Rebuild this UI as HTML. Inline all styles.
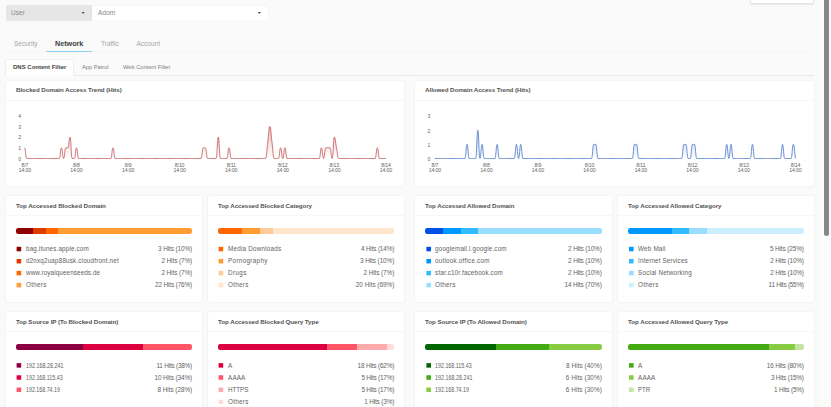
<!DOCTYPE html>
<html><head><meta charset="utf-8"><style>
*{margin:0;padding:0;box-sizing:border-box}
html,body{width:831px;height:407px;overflow:hidden;background:#fafafa;font-family:"Liberation Sans",sans-serif;color:#555}
.a{position:absolute}
.t{position:absolute;white-space:nowrap;line-height:1}
.card{position:absolute;background:#fff;border-radius:2px;box-shadow:0 0 2px rgba(0,0,0,0.09)}
.ttl{position:absolute;white-space:nowrap;font-weight:bold;font-size:6.2px;letter-spacing:-0.06px;color:#525252;line-height:1}
.div{position:absolute;left:0;right:0;height:1px;background:#f6f6f6}
.bar{position:absolute;height:6.4px;border-radius:2.3px;overflow:hidden;display:flex}
.bar i{display:block;height:100%}
.sq{position:absolute;width:4.6px;height:4.6px}
.lg{position:absolute;white-space:nowrap;font-size:6.3px;color:#626262;line-height:1}
.val{position:absolute;white-space:nowrap;font-size:6.4px;color:#646464;line-height:1;text-align:right}
.ax{position:absolute;white-space:nowrap;font-size:5.2px;letter-spacing:-0.15px;color:#666;line-height:1;text-align:center}
</style></head><body>
<div class="a" style="left:749.6px;top:-11.6px;width:64.5px;height:16px;background:#fff;border:1px solid #e2e2e2;border-radius:2px;box-shadow:0 1px 1.5px rgba(0,0,0,0.07)"></div>
<div class="a" style="left:6px;top:5px;width:86px;height:16px;background:#e6e6e6;border-radius:1.5px"></div>
<div class="t" style="left:11px;top:10.00px;font-size:6.6px;color:#8a8a8a">User</div>
<svg class="a" style="left:80px;top:10px" width="6" height="6"><path d="M1.5,2 L4.9,2 L3.2,3.9 Z" fill="#555"/></svg>
<div class="a" style="left:92px;top:6px;width:176.3px;height:14.3px;background:#fff;border-radius:1.5px;box-shadow:0 0 1.2px rgba(0,0,0,0.13)"></div>
<div class="t" style="left:98.1px;top:10.00px;font-size:6.6px;color:#888">Adom</div>
<svg class="a" style="left:256px;top:10px" width="6" height="6"><path d="M1.6,2 L5.0,2 L3.3,3.9 Z" fill="#555"/></svg>
<div class="a" style="left:5px;top:51px;width:809px;height:1px;background:#f5f5f5"></div>
<div class="t" style="left:14px;top:41.00px;font-size:6.5px;color:#a5a5a5">Security</div>
<div class="t" style="left:55px;top:40.00px;font-size:7.2px;font-weight:bold;color:#404040">Network</div>
<div class="t" style="left:101px;top:41.00px;font-size:6.5px;color:#a5a5a5">Traffic</div>
<div class="t" style="left:136.5px;top:41.00px;font-size:6.5px;color:#a5a5a5">Account</div>
<div class="a" style="left:46px;top:51px;width:46px;height:1px;background:#8dd0f2"></div>
<div class="a" style="left:5px;top:75px;width:809px;height:1px;background:#e8e8e8"></div>
<div class="a" style="left:5px;top:59px;width:69px;height:17px;background:#fff;border:1px solid #eeeeee;border-bottom:none;border-radius:1.5px 1.5px 0 0"></div>
<div class="t" style="left:13px;top:64.00px;font-size:6px;font-weight:bold;color:#444">DNS Content Filter</div>
<div class="t" style="left:82px;top:65.00px;font-size:5.7px;color:#7a7a7a">App Patrol</div>
<div class="t" style="left:123px;top:65.00px;font-size:5.7px;color:#7a7a7a">Web Content Filter</div>
<div class="card" style="left:5.5px;top:81px;width:398.8px;height:105px">
<div class="ttl" style="left:10.5px;top:6.00px">Blocked Domain Access Trend (Hits)</div>
<div class="div" style="top:19px"></div>
</div>
<div class="ax" style="left:16.5px;top:157.00px;width:6px">0</div>
<div class="ax" style="left:16.5px;top:146.00px;width:6px">1</div>
<div class="ax" style="left:16.5px;top:135.00px;width:6px">2</div>
<div class="ax" style="left:16.5px;top:125.00px;width:6px">3</div>
<div class="ax" style="left:16.5px;top:114.00px;width:6px">4</div>
<svg class="a" style="left:0;top:0" width="831" height="407"><defs><linearGradient id="gb" x1="0" y1="0" x2="0" y2="1"><stop offset="0" stop-color="#d77777" stop-opacity="0.5"/><stop offset="1" stop-color="#d77777" stop-opacity="0.0"/></linearGradient></defs><path d="M24.90,147.80 C25.93,155.50 26.02,158.50 27.05,158.50 C28.08,158.50 28.17,158.50 29.20,158.50 C30.23,158.50 30.31,158.50 31.35,158.50 C32.38,158.50 32.46,158.50 33.50,158.50 C34.53,158.50 34.61,158.50 35.64,158.50 C36.68,158.50 36.76,158.50 37.79,158.50 C38.82,158.50 38.91,158.50 39.94,158.50 C40.97,158.50 41.06,158.50 42.09,158.50 C43.12,158.50 43.21,158.50 44.24,158.50 C45.27,158.50 45.36,158.50 46.39,158.50 C47.42,158.50 47.51,158.50 48.54,158.50 C49.57,158.50 49.65,158.50 50.69,158.50 C51.72,158.50 51.80,158.50 52.83,158.50 C53.87,158.50 53.95,158.50 54.98,158.50 C56.01,158.50 56.10,158.50 57.13,158.50 C58.16,158.50 58.25,158.50 59.28,158.50 C60.31,158.50 60.40,147.80 61.43,147.80 C62.46,147.80 62.55,158.50 63.58,158.50 C64.61,158.50 64.70,147.80 65.73,147.80 C66.76,147.80 66.84,147.80 67.88,147.80 C68.91,147.80 68.99,137.10 70.03,137.10 C71.06,137.10 71.14,158.50 72.17,158.50 C73.21,158.50 73.29,158.50 74.32,158.50 C75.35,158.50 75.44,147.80 76.47,147.80 C77.50,147.80 77.59,158.50 78.62,158.50 C79.65,158.50 79.74,158.50 80.77,158.50 C81.80,158.50 81.89,158.50 82.92,158.50 C83.95,158.50 84.04,158.50 85.07,158.50 C86.10,158.50 86.18,158.50 87.22,158.50 C88.25,158.50 88.33,158.50 89.36,158.50 C90.40,158.50 90.48,158.50 91.51,158.50 C92.54,158.50 92.63,158.50 93.66,158.50 C94.69,158.50 94.78,158.50 95.81,158.50 C96.84,158.50 96.93,158.50 97.96,158.50 C98.99,158.50 99.08,158.50 100.11,158.50 C101.14,158.50 101.23,158.50 102.26,158.50 C103.29,158.50 103.37,158.50 104.41,158.50 C105.44,158.50 105.52,158.50 106.55,158.50 C107.59,158.50 107.67,158.50 108.70,158.50 C109.73,158.50 109.82,158.50 110.85,158.50 C111.88,158.50 111.97,147.80 113.00,147.80 C114.03,147.80 114.12,158.50 115.15,158.50 C116.18,158.50 116.27,158.50 117.30,158.50 C118.33,158.50 118.42,158.50 119.45,158.50 C120.48,158.50 120.56,158.50 121.60,158.50 C122.63,158.50 122.71,158.50 123.75,158.50 C124.78,158.50 124.86,158.50 125.89,158.50 C126.93,158.50 127.01,158.50 128.04,158.50 C129.07,158.50 129.16,158.50 130.19,158.50 C131.22,158.50 131.31,158.50 132.34,158.50 C133.37,158.50 133.46,158.50 134.49,158.50 C135.52,158.50 135.61,158.50 136.64,158.50 C137.67,158.50 137.76,158.50 138.79,158.50 C139.82,158.50 139.90,158.50 140.94,158.50 C141.97,158.50 142.05,158.50 143.08,158.50 C144.12,158.50 144.20,158.50 145.23,158.50 C146.26,158.50 146.35,158.50 147.38,158.50 C148.41,158.50 148.50,158.50 149.53,158.50 C150.56,158.50 150.65,158.50 151.68,158.50 C152.71,158.50 152.80,158.50 153.83,158.50 C154.86,158.50 154.95,158.50 155.98,158.50 C157.01,158.50 157.09,158.50 158.13,158.50 C159.16,158.50 159.24,158.50 160.28,158.50 C161.31,158.50 161.39,158.50 162.42,158.50 C163.46,158.50 163.54,158.50 164.57,158.50 C165.60,158.50 165.69,158.50 166.72,158.50 C167.75,158.50 167.84,158.50 168.87,158.50 C169.90,158.50 169.99,158.50 171.02,158.50 C172.05,158.50 172.14,158.50 173.17,158.50 C174.20,158.50 174.29,158.50 175.32,158.50 C176.35,158.50 176.43,158.50 177.47,158.50 C178.50,158.50 178.58,158.50 179.61,158.50 C180.65,158.50 180.73,158.50 181.76,158.50 C182.79,158.50 182.88,158.50 183.91,158.50 C184.94,158.50 185.03,158.50 186.06,158.50 C187.09,158.50 187.18,158.50 188.21,158.50 C189.24,158.50 189.33,158.50 190.36,158.50 C191.39,158.50 191.48,158.50 192.51,158.50 C193.54,158.50 193.62,158.50 194.66,158.50 C195.69,158.50 195.77,158.50 196.80,158.50 C197.84,158.50 197.92,158.50 198.95,158.50 C199.99,158.50 200.07,158.50 201.10,158.50 C202.13,158.50 202.22,147.80 203.25,147.80 C204.28,147.80 204.37,147.80 205.40,147.80 C206.43,147.80 206.52,158.50 207.55,158.50 C208.58,158.50 208.67,158.50 209.70,158.50 C210.73,158.50 210.81,158.50 211.85,158.50 C212.88,158.50 212.96,158.50 214.00,158.50 C215.03,158.50 215.11,158.50 216.14,158.50 C217.18,158.50 217.26,137.10 218.29,137.10 C219.32,137.10 219.41,158.50 220.44,158.50 C221.47,158.50 221.56,158.50 222.59,158.50 C223.62,158.50 223.71,158.50 224.74,158.50 C225.77,158.50 225.86,158.50 226.89,158.50 C227.92,158.50 228.01,147.80 229.04,147.80 C230.07,147.80 230.15,158.50 231.19,158.50 C232.22,158.50 232.30,158.50 233.33,158.50 C234.37,158.50 234.45,158.50 235.48,158.50 C236.51,158.50 236.60,158.50 237.63,158.50 C238.66,158.50 238.75,158.50 239.78,158.50 C240.81,158.50 240.90,158.50 241.93,158.50 C242.96,158.50 243.05,158.50 244.08,158.50 C245.11,158.50 245.20,158.50 246.23,158.50 C247.26,158.50 247.34,158.50 248.38,158.50 C249.41,158.50 249.49,158.50 250.53,158.50 C251.56,158.50 251.64,158.50 252.67,158.50 C253.71,158.50 253.79,158.50 254.82,158.50 C255.85,158.50 255.94,158.50 256.97,158.50 C258.00,158.50 258.09,158.50 259.12,158.50 C260.15,158.50 260.24,158.50 261.27,158.50 C262.30,158.50 262.39,158.50 263.42,158.50 C264.45,158.50 264.54,158.50 265.57,158.50 C266.60,158.50 266.68,150.15 267.72,142.45 C268.75,134.75 268.83,126.40 269.86,126.40 C270.90,126.40 270.98,134.75 272.01,142.45 C273.04,150.15 273.13,158.50 274.16,158.50 C275.19,158.50 275.28,158.50 276.31,158.50 C277.34,158.50 277.43,158.50 278.46,158.50 C279.49,158.50 279.58,147.80 280.61,147.80 C281.64,147.80 281.73,158.50 282.76,158.50 C283.79,158.50 283.87,147.80 284.91,147.80 C285.94,147.80 286.02,158.50 287.05,158.50 C288.09,158.50 288.17,158.50 289.20,158.50 C290.24,158.50 290.32,158.50 291.35,158.50 C292.38,158.50 292.47,158.50 293.50,158.50 C294.53,158.50 294.62,158.50 295.65,158.50 C296.68,158.50 296.77,158.50 297.80,158.50 C298.83,158.50 298.92,158.50 299.95,158.50 C300.98,158.50 301.06,158.50 302.10,158.50 C303.13,158.50 303.21,158.50 304.25,158.50 C305.28,158.50 305.36,158.50 306.39,158.50 C307.43,158.50 307.51,158.50 308.54,158.50 C309.57,158.50 309.66,158.50 310.69,158.50 C311.72,158.50 311.81,158.50 312.84,158.50 C313.87,158.50 313.96,158.50 314.99,158.50 C316.02,158.50 316.11,158.50 317.14,158.50 C318.17,158.50 318.26,158.50 319.29,158.50 C320.32,158.50 320.40,147.80 321.44,147.80 C322.47,147.80 322.55,158.50 323.58,158.50 C324.62,158.50 324.70,147.80 325.73,147.80 C326.76,147.80 326.85,147.80 327.88,147.80 C328.91,147.80 329.00,147.80 330.03,147.80 C331.06,147.80 331.15,158.50 332.18,158.50 C333.21,158.50 333.30,137.10 334.33,137.10 C335.36,137.10 335.45,142.66 336.48,147.80 C337.51,152.94 337.59,158.50 338.63,158.50 C339.66,158.50 339.74,158.50 340.77,158.50 C341.81,158.50 341.89,158.50 342.92,158.50 C343.96,158.50 344.04,158.50 345.07,158.50 C346.10,158.50 346.19,158.50 347.22,158.50 C348.25,158.50 348.34,158.50 349.37,158.50 C350.40,158.50 350.49,158.50 351.52,158.50 C352.55,158.50 352.64,158.50 353.67,158.50 C354.70,158.50 354.79,158.50 355.82,158.50 C356.85,158.50 356.93,158.50 357.97,158.50 C359.00,158.50 359.08,158.50 360.11,158.50 C361.15,158.50 361.23,158.50 362.26,158.50 C363.29,158.50 363.38,158.50 364.41,158.50 C365.44,158.50 365.53,158.50 366.56,158.50 C367.59,158.50 367.68,158.50 368.71,158.50 C369.74,158.50 369.83,158.50 370.86,158.50 C371.89,158.50 371.98,158.50 373.01,158.50 C374.04,158.50 374.12,158.50 375.16,158.50 C376.19,158.50 376.27,147.80 377.30,147.80 C378.34,147.80 378.42,158.50 379.45,158.50 C380.49,158.50 380.57,158.50 381.60,158.50 C382.63,158.50 382.72,158.50 383.75,158.50 C384.78,158.50 384.87,158.50 385.90,158.50 L385.90,158.50 L24.90,158.50 Z" fill="url(#gb)" stroke="none"/><path d="M24.90,147.80 C25.93,155.50 26.02,158.50 27.05,158.50 C28.08,158.50 28.17,158.50 29.20,158.50 C30.23,158.50 30.31,158.50 31.35,158.50 C32.38,158.50 32.46,158.50 33.50,158.50 C34.53,158.50 34.61,158.50 35.64,158.50 C36.68,158.50 36.76,158.50 37.79,158.50 C38.82,158.50 38.91,158.50 39.94,158.50 C40.97,158.50 41.06,158.50 42.09,158.50 C43.12,158.50 43.21,158.50 44.24,158.50 C45.27,158.50 45.36,158.50 46.39,158.50 C47.42,158.50 47.51,158.50 48.54,158.50 C49.57,158.50 49.65,158.50 50.69,158.50 C51.72,158.50 51.80,158.50 52.83,158.50 C53.87,158.50 53.95,158.50 54.98,158.50 C56.01,158.50 56.10,158.50 57.13,158.50 C58.16,158.50 58.25,158.50 59.28,158.50 C60.31,158.50 60.40,147.80 61.43,147.80 C62.46,147.80 62.55,158.50 63.58,158.50 C64.61,158.50 64.70,147.80 65.73,147.80 C66.76,147.80 66.84,147.80 67.88,147.80 C68.91,147.80 68.99,137.10 70.03,137.10 C71.06,137.10 71.14,158.50 72.17,158.50 C73.21,158.50 73.29,158.50 74.32,158.50 C75.35,158.50 75.44,147.80 76.47,147.80 C77.50,147.80 77.59,158.50 78.62,158.50 C79.65,158.50 79.74,158.50 80.77,158.50 C81.80,158.50 81.89,158.50 82.92,158.50 C83.95,158.50 84.04,158.50 85.07,158.50 C86.10,158.50 86.18,158.50 87.22,158.50 C88.25,158.50 88.33,158.50 89.36,158.50 C90.40,158.50 90.48,158.50 91.51,158.50 C92.54,158.50 92.63,158.50 93.66,158.50 C94.69,158.50 94.78,158.50 95.81,158.50 C96.84,158.50 96.93,158.50 97.96,158.50 C98.99,158.50 99.08,158.50 100.11,158.50 C101.14,158.50 101.23,158.50 102.26,158.50 C103.29,158.50 103.37,158.50 104.41,158.50 C105.44,158.50 105.52,158.50 106.55,158.50 C107.59,158.50 107.67,158.50 108.70,158.50 C109.73,158.50 109.82,158.50 110.85,158.50 C111.88,158.50 111.97,147.80 113.00,147.80 C114.03,147.80 114.12,158.50 115.15,158.50 C116.18,158.50 116.27,158.50 117.30,158.50 C118.33,158.50 118.42,158.50 119.45,158.50 C120.48,158.50 120.56,158.50 121.60,158.50 C122.63,158.50 122.71,158.50 123.75,158.50 C124.78,158.50 124.86,158.50 125.89,158.50 C126.93,158.50 127.01,158.50 128.04,158.50 C129.07,158.50 129.16,158.50 130.19,158.50 C131.22,158.50 131.31,158.50 132.34,158.50 C133.37,158.50 133.46,158.50 134.49,158.50 C135.52,158.50 135.61,158.50 136.64,158.50 C137.67,158.50 137.76,158.50 138.79,158.50 C139.82,158.50 139.90,158.50 140.94,158.50 C141.97,158.50 142.05,158.50 143.08,158.50 C144.12,158.50 144.20,158.50 145.23,158.50 C146.26,158.50 146.35,158.50 147.38,158.50 C148.41,158.50 148.50,158.50 149.53,158.50 C150.56,158.50 150.65,158.50 151.68,158.50 C152.71,158.50 152.80,158.50 153.83,158.50 C154.86,158.50 154.95,158.50 155.98,158.50 C157.01,158.50 157.09,158.50 158.13,158.50 C159.16,158.50 159.24,158.50 160.28,158.50 C161.31,158.50 161.39,158.50 162.42,158.50 C163.46,158.50 163.54,158.50 164.57,158.50 C165.60,158.50 165.69,158.50 166.72,158.50 C167.75,158.50 167.84,158.50 168.87,158.50 C169.90,158.50 169.99,158.50 171.02,158.50 C172.05,158.50 172.14,158.50 173.17,158.50 C174.20,158.50 174.29,158.50 175.32,158.50 C176.35,158.50 176.43,158.50 177.47,158.50 C178.50,158.50 178.58,158.50 179.61,158.50 C180.65,158.50 180.73,158.50 181.76,158.50 C182.79,158.50 182.88,158.50 183.91,158.50 C184.94,158.50 185.03,158.50 186.06,158.50 C187.09,158.50 187.18,158.50 188.21,158.50 C189.24,158.50 189.33,158.50 190.36,158.50 C191.39,158.50 191.48,158.50 192.51,158.50 C193.54,158.50 193.62,158.50 194.66,158.50 C195.69,158.50 195.77,158.50 196.80,158.50 C197.84,158.50 197.92,158.50 198.95,158.50 C199.99,158.50 200.07,158.50 201.10,158.50 C202.13,158.50 202.22,147.80 203.25,147.80 C204.28,147.80 204.37,147.80 205.40,147.80 C206.43,147.80 206.52,158.50 207.55,158.50 C208.58,158.50 208.67,158.50 209.70,158.50 C210.73,158.50 210.81,158.50 211.85,158.50 C212.88,158.50 212.96,158.50 214.00,158.50 C215.03,158.50 215.11,158.50 216.14,158.50 C217.18,158.50 217.26,137.10 218.29,137.10 C219.32,137.10 219.41,158.50 220.44,158.50 C221.47,158.50 221.56,158.50 222.59,158.50 C223.62,158.50 223.71,158.50 224.74,158.50 C225.77,158.50 225.86,158.50 226.89,158.50 C227.92,158.50 228.01,147.80 229.04,147.80 C230.07,147.80 230.15,158.50 231.19,158.50 C232.22,158.50 232.30,158.50 233.33,158.50 C234.37,158.50 234.45,158.50 235.48,158.50 C236.51,158.50 236.60,158.50 237.63,158.50 C238.66,158.50 238.75,158.50 239.78,158.50 C240.81,158.50 240.90,158.50 241.93,158.50 C242.96,158.50 243.05,158.50 244.08,158.50 C245.11,158.50 245.20,158.50 246.23,158.50 C247.26,158.50 247.34,158.50 248.38,158.50 C249.41,158.50 249.49,158.50 250.53,158.50 C251.56,158.50 251.64,158.50 252.67,158.50 C253.71,158.50 253.79,158.50 254.82,158.50 C255.85,158.50 255.94,158.50 256.97,158.50 C258.00,158.50 258.09,158.50 259.12,158.50 C260.15,158.50 260.24,158.50 261.27,158.50 C262.30,158.50 262.39,158.50 263.42,158.50 C264.45,158.50 264.54,158.50 265.57,158.50 C266.60,158.50 266.68,150.15 267.72,142.45 C268.75,134.75 268.83,126.40 269.86,126.40 C270.90,126.40 270.98,134.75 272.01,142.45 C273.04,150.15 273.13,158.50 274.16,158.50 C275.19,158.50 275.28,158.50 276.31,158.50 C277.34,158.50 277.43,158.50 278.46,158.50 C279.49,158.50 279.58,147.80 280.61,147.80 C281.64,147.80 281.73,158.50 282.76,158.50 C283.79,158.50 283.87,147.80 284.91,147.80 C285.94,147.80 286.02,158.50 287.05,158.50 C288.09,158.50 288.17,158.50 289.20,158.50 C290.24,158.50 290.32,158.50 291.35,158.50 C292.38,158.50 292.47,158.50 293.50,158.50 C294.53,158.50 294.62,158.50 295.65,158.50 C296.68,158.50 296.77,158.50 297.80,158.50 C298.83,158.50 298.92,158.50 299.95,158.50 C300.98,158.50 301.06,158.50 302.10,158.50 C303.13,158.50 303.21,158.50 304.25,158.50 C305.28,158.50 305.36,158.50 306.39,158.50 C307.43,158.50 307.51,158.50 308.54,158.50 C309.57,158.50 309.66,158.50 310.69,158.50 C311.72,158.50 311.81,158.50 312.84,158.50 C313.87,158.50 313.96,158.50 314.99,158.50 C316.02,158.50 316.11,158.50 317.14,158.50 C318.17,158.50 318.26,158.50 319.29,158.50 C320.32,158.50 320.40,147.80 321.44,147.80 C322.47,147.80 322.55,158.50 323.58,158.50 C324.62,158.50 324.70,147.80 325.73,147.80 C326.76,147.80 326.85,147.80 327.88,147.80 C328.91,147.80 329.00,147.80 330.03,147.80 C331.06,147.80 331.15,158.50 332.18,158.50 C333.21,158.50 333.30,137.10 334.33,137.10 C335.36,137.10 335.45,142.66 336.48,147.80 C337.51,152.94 337.59,158.50 338.63,158.50 C339.66,158.50 339.74,158.50 340.77,158.50 C341.81,158.50 341.89,158.50 342.92,158.50 C343.96,158.50 344.04,158.50 345.07,158.50 C346.10,158.50 346.19,158.50 347.22,158.50 C348.25,158.50 348.34,158.50 349.37,158.50 C350.40,158.50 350.49,158.50 351.52,158.50 C352.55,158.50 352.64,158.50 353.67,158.50 C354.70,158.50 354.79,158.50 355.82,158.50 C356.85,158.50 356.93,158.50 357.97,158.50 C359.00,158.50 359.08,158.50 360.11,158.50 C361.15,158.50 361.23,158.50 362.26,158.50 C363.29,158.50 363.38,158.50 364.41,158.50 C365.44,158.50 365.53,158.50 366.56,158.50 C367.59,158.50 367.68,158.50 368.71,158.50 C369.74,158.50 369.83,158.50 370.86,158.50 C371.89,158.50 371.98,158.50 373.01,158.50 C374.04,158.50 374.12,158.50 375.16,158.50 C376.19,158.50 376.27,147.80 377.30,147.80 C378.34,147.80 378.42,158.50 379.45,158.50 C380.49,158.50 380.57,158.50 381.60,158.50 C382.63,158.50 382.72,158.50 383.75,158.50 C384.78,158.50 384.87,158.50 385.90,158.50" fill="none" stroke="#bd4d4d" stroke-width="0.75" stroke-linejoin="round"/></svg>
<div class="ax" style="left:14.90px;top:163.00px;width:20px">8/7</div>
<div class="ax" style="left:14.90px;top:168.00px;width:20px">14:00</div>
<div class="ax" style="left:66.47px;top:163.00px;width:20px">8/8</div>
<div class="ax" style="left:66.47px;top:168.00px;width:20px">14:00</div>
<div class="ax" style="left:118.04px;top:163.00px;width:20px">8/9</div>
<div class="ax" style="left:118.04px;top:168.00px;width:20px">14:00</div>
<div class="ax" style="left:169.61px;top:163.00px;width:20px">8/10</div>
<div class="ax" style="left:169.61px;top:168.00px;width:20px">14:00</div>
<div class="ax" style="left:221.19px;top:163.00px;width:20px">8/11</div>
<div class="ax" style="left:221.19px;top:168.00px;width:20px">14:00</div>
<div class="ax" style="left:272.76px;top:163.00px;width:20px">8/12</div>
<div class="ax" style="left:272.76px;top:168.00px;width:20px">14:00</div>
<div class="ax" style="left:324.33px;top:163.00px;width:20px">8/13</div>
<div class="ax" style="left:324.33px;top:168.00px;width:20px">14:00</div>
<div class="ax" style="left:375.90px;top:163.00px;width:20px">8/14</div>
<div class="ax" style="left:375.90px;top:168.00px;width:20px">14:00</div>
<div class="card" style="left:414.6px;top:81px;width:399.4px;height:105px">
<div class="ttl" style="left:10.5px;top:6.00px">Allowed Domain Access Trend (Hits)</div>
<div class="div" style="top:19px"></div>
</div>
<div class="ax" style="left:425.8px;top:157.00px;width:6px">0</div>
<div class="ax" style="left:425.8px;top:143.00px;width:6px">1</div>
<div class="ax" style="left:425.8px;top:129.00px;width:6px">2</div>
<div class="ax" style="left:425.8px;top:114.00px;width:6px">3</div>
<svg class="a" style="left:0;top:0" width="831" height="407"><defs><linearGradient id="ga" x1="0" y1="0" x2="0" y2="1"><stop offset="0" stop-color="#6f93d8" stop-opacity="0.5"/><stop offset="1" stop-color="#6f93d8" stop-opacity="0.0"/></linearGradient></defs><path d="M434.90,158.50 C435.93,158.50 436.02,158.50 437.05,158.50 C438.08,158.50 438.16,158.50 439.19,158.50 C440.22,158.50 440.31,158.50 441.34,158.50 C442.37,158.50 442.45,158.50 443.48,158.50 C444.51,158.50 444.60,158.50 445.63,158.50 C446.66,158.50 446.75,158.50 447.77,158.50 C448.80,158.50 448.89,158.50 449.92,158.50 C450.95,158.50 451.04,158.50 452.07,158.50 C453.10,158.50 453.18,158.50 454.21,158.50 C455.24,158.50 455.33,158.50 456.36,158.50 C457.39,158.50 457.47,158.50 458.50,158.50 C459.53,158.50 459.62,158.50 460.65,158.50 C461.68,158.50 461.77,158.50 462.80,158.50 C463.83,158.50 463.91,158.50 464.94,158.50 C465.97,158.50 466.06,144.40 467.09,144.40 C468.12,144.40 468.20,158.50 469.23,158.50 C470.26,158.50 470.35,158.50 471.38,158.50 C472.41,158.50 472.50,158.50 473.52,158.50 C474.55,158.50 474.64,158.50 475.67,158.50 C476.70,158.50 476.79,130.30 477.82,130.30 C478.85,130.30 478.93,158.50 479.96,158.50 C480.99,158.50 481.08,144.40 482.11,144.40 C483.14,144.40 483.22,158.50 484.25,158.50 C485.28,158.50 485.37,158.50 486.40,158.50 C487.43,158.50 487.52,158.50 488.55,158.50 C489.58,158.50 489.66,158.50 490.69,158.50 C491.72,158.50 491.81,158.50 492.84,158.50 C493.87,158.50 493.95,158.50 494.98,158.50 C496.01,158.50 496.10,144.40 497.13,144.40 C498.16,144.40 498.25,158.50 499.27,158.50 C500.30,158.50 500.39,158.50 501.42,158.50 C502.45,158.50 502.54,158.50 503.57,158.50 C504.60,158.50 504.68,158.50 505.71,158.50 C506.74,158.50 506.83,158.50 507.86,158.50 C508.89,158.50 508.97,158.50 510.00,158.50 C511.03,158.50 511.12,158.50 512.15,158.50 C513.18,158.50 513.27,158.50 514.30,158.50 C515.33,158.50 515.41,144.40 516.44,144.40 C517.47,144.40 517.56,158.50 518.59,158.50 C519.62,158.50 519.70,144.40 520.73,144.40 C521.76,144.40 521.85,158.50 522.88,158.50 C523.91,158.50 524.00,158.50 525.02,158.50 C526.05,158.50 526.14,158.50 527.17,158.50 C528.20,158.50 528.29,158.50 529.32,158.50 C530.35,158.50 530.43,158.50 531.46,158.50 C532.49,158.50 532.58,158.50 533.61,158.50 C534.64,158.50 534.72,158.50 535.75,158.50 C536.78,158.50 536.87,158.50 537.90,158.50 C538.93,158.50 539.02,158.50 540.05,158.50 C541.08,158.50 541.16,158.50 542.19,158.50 C543.22,158.50 543.31,158.50 544.34,158.50 C545.37,158.50 545.45,158.50 546.48,158.50 C547.51,158.50 547.60,158.50 548.63,158.50 C549.66,158.50 549.75,158.50 550.77,158.50 C551.80,158.50 551.89,158.50 552.92,158.50 C553.95,158.50 554.04,158.50 555.07,158.50 C556.10,158.50 556.18,158.50 557.21,158.50 C558.24,158.50 558.33,158.50 559.36,158.50 C560.39,158.50 560.47,158.50 561.50,158.50 C562.53,158.50 562.62,158.50 563.65,158.50 C564.68,158.50 564.77,158.50 565.80,158.50 C566.83,158.50 566.91,158.50 567.94,158.50 C568.97,158.50 569.06,158.50 570.09,158.50 C571.12,158.50 571.20,158.50 572.23,158.50 C573.26,158.50 573.35,158.50 574.38,158.50 C575.41,158.50 575.50,158.50 576.52,158.50 C577.55,158.50 577.64,158.50 578.67,158.50 C579.70,158.50 579.79,158.50 580.82,158.50 C581.85,158.50 581.93,158.50 582.96,158.50 C583.99,158.50 584.08,158.50 585.11,158.50 C586.14,158.50 586.22,158.50 587.25,158.50 C588.28,158.50 588.37,158.50 589.40,158.50 C590.43,158.50 590.52,158.50 591.55,158.50 C592.58,158.50 592.66,144.40 593.69,144.40 C594.72,144.40 594.81,144.40 595.84,144.40 C596.87,144.40 596.95,158.50 597.98,158.50 C599.01,158.50 599.10,158.50 600.13,158.50 C601.16,158.50 601.25,158.50 602.27,158.50 C603.30,158.50 603.39,158.50 604.42,158.50 C605.45,158.50 605.54,158.50 606.57,158.50 C607.60,158.50 607.68,158.50 608.71,158.50 C609.74,158.50 609.83,158.50 610.86,158.50 C611.89,158.50 611.97,158.50 613.00,158.50 C614.03,158.50 614.12,158.50 615.15,158.50 C616.18,158.50 616.27,158.50 617.30,158.50 C618.33,158.50 618.41,158.50 619.44,158.50 C620.47,158.50 620.56,158.50 621.59,158.50 C622.62,158.50 622.70,158.50 623.73,158.50 C624.76,158.50 624.85,158.50 625.88,158.50 C626.91,158.50 627.00,158.50 628.02,158.50 C629.05,158.50 629.14,158.50 630.17,158.50 C631.20,158.50 631.29,158.50 632.32,158.50 C633.35,158.50 633.43,144.40 634.46,144.40 C635.49,144.40 635.58,144.40 636.61,144.40 C637.64,144.40 637.72,158.50 638.75,158.50 C639.78,158.50 639.87,158.50 640.90,158.50 C641.93,158.50 642.02,158.50 643.05,158.50 C644.08,158.50 644.16,158.50 645.19,158.50 C646.22,158.50 646.31,158.50 647.34,158.50 C648.37,158.50 648.45,158.50 649.48,158.50 C650.51,158.50 650.60,158.50 651.63,158.50 C652.66,158.50 652.75,158.50 653.77,158.50 C654.80,158.50 654.89,158.50 655.92,158.50 C656.95,158.50 657.04,158.50 658.07,158.50 C659.10,158.50 659.18,158.50 660.21,158.50 C661.24,158.50 661.33,158.50 662.36,158.50 C663.39,158.50 663.47,158.50 664.50,158.50 C665.53,158.50 665.62,158.50 666.65,158.50 C667.68,158.50 667.77,158.50 668.80,158.50 C669.83,158.50 669.91,158.50 670.94,158.50 C671.97,158.50 672.06,158.50 673.09,158.50 C674.12,158.50 674.20,158.50 675.23,158.50 C676.26,158.50 676.35,158.50 677.38,158.50 C678.41,158.50 678.50,158.50 679.52,158.50 C680.55,158.50 680.64,158.50 681.67,158.50 C682.70,158.50 682.79,144.40 683.82,144.40 C684.85,144.40 684.93,144.40 685.96,144.40 C686.99,144.40 687.08,158.50 688.11,158.50 C689.14,158.50 689.22,158.50 690.25,158.50 C691.28,158.50 691.37,144.40 692.40,144.40 C693.43,144.40 693.52,144.40 694.55,144.40 C695.58,144.40 695.66,158.50 696.69,158.50 C697.72,158.50 697.81,158.50 698.84,158.50 C699.87,158.50 699.95,158.50 700.98,158.50 C702.01,158.50 702.10,158.50 703.13,158.50 C704.16,158.50 704.25,158.50 705.27,158.50 C706.30,158.50 706.39,158.50 707.42,158.50 C708.45,158.50 708.54,158.50 709.57,158.50 C710.60,158.50 710.68,158.50 711.71,158.50 C712.74,158.50 712.83,158.50 713.86,158.50 C714.89,158.50 714.97,158.50 716.00,158.50 C717.03,158.50 717.12,158.50 718.15,158.50 C719.18,158.50 719.27,158.50 720.30,158.50 C721.33,158.50 721.41,158.50 722.44,158.50 C723.47,158.50 723.56,158.50 724.59,158.50 C725.62,158.50 725.70,144.40 726.73,144.40 C727.76,144.40 727.85,158.50 728.88,158.50 C729.91,158.50 730.00,144.40 731.02,144.40 C732.05,144.40 732.14,158.50 733.17,158.50 C734.20,158.50 734.29,158.50 735.32,158.50 C736.35,158.50 736.43,158.50 737.46,158.50 C738.49,158.50 738.58,158.50 739.61,158.50 C740.64,158.50 740.72,158.50 741.75,158.50 C742.78,158.50 742.87,158.50 743.90,158.50 C744.93,158.50 745.02,158.50 746.05,158.50 C747.08,158.50 747.16,158.50 748.19,158.50 C749.22,158.50 749.31,158.50 750.34,158.50 C751.37,158.50 751.45,144.40 752.48,144.40 C753.51,144.40 753.60,158.50 754.63,158.50 C755.66,158.50 755.75,158.50 756.77,158.50 C757.80,158.50 757.89,158.50 758.92,158.50 C759.95,158.50 760.04,158.50 761.07,158.50 C762.10,158.50 762.18,158.50 763.21,158.50 C764.24,158.50 764.33,158.50 765.36,158.50 C766.39,158.50 766.47,158.50 767.50,158.50 C768.53,158.50 768.62,158.50 769.65,158.50 C770.68,158.50 770.77,158.50 771.80,158.50 C772.83,158.50 772.91,158.50 773.94,158.50 C774.97,158.50 775.06,158.50 776.09,158.50 C777.12,158.50 777.20,158.50 778.23,158.50 C779.26,158.50 779.35,158.50 780.38,158.50 C781.41,158.50 781.50,144.40 782.52,144.40 C783.55,144.40 783.64,158.50 784.67,158.50 C785.70,158.50 785.79,158.50 786.82,158.50 C787.85,158.50 787.93,158.50 788.96,158.50 C789.99,158.50 790.08,158.50 791.11,158.50 C792.14,158.50 792.22,144.40 793.25,144.40 C794.28,144.40 794.37,148.35 795.40,158.50 L795.40,158.50 L434.90,158.50 Z" fill="url(#ga)" stroke="none"/><path d="M434.90,158.50 C435.93,158.50 436.02,158.50 437.05,158.50 C438.08,158.50 438.16,158.50 439.19,158.50 C440.22,158.50 440.31,158.50 441.34,158.50 C442.37,158.50 442.45,158.50 443.48,158.50 C444.51,158.50 444.60,158.50 445.63,158.50 C446.66,158.50 446.75,158.50 447.77,158.50 C448.80,158.50 448.89,158.50 449.92,158.50 C450.95,158.50 451.04,158.50 452.07,158.50 C453.10,158.50 453.18,158.50 454.21,158.50 C455.24,158.50 455.33,158.50 456.36,158.50 C457.39,158.50 457.47,158.50 458.50,158.50 C459.53,158.50 459.62,158.50 460.65,158.50 C461.68,158.50 461.77,158.50 462.80,158.50 C463.83,158.50 463.91,158.50 464.94,158.50 C465.97,158.50 466.06,144.40 467.09,144.40 C468.12,144.40 468.20,158.50 469.23,158.50 C470.26,158.50 470.35,158.50 471.38,158.50 C472.41,158.50 472.50,158.50 473.52,158.50 C474.55,158.50 474.64,158.50 475.67,158.50 C476.70,158.50 476.79,130.30 477.82,130.30 C478.85,130.30 478.93,158.50 479.96,158.50 C480.99,158.50 481.08,144.40 482.11,144.40 C483.14,144.40 483.22,158.50 484.25,158.50 C485.28,158.50 485.37,158.50 486.40,158.50 C487.43,158.50 487.52,158.50 488.55,158.50 C489.58,158.50 489.66,158.50 490.69,158.50 C491.72,158.50 491.81,158.50 492.84,158.50 C493.87,158.50 493.95,158.50 494.98,158.50 C496.01,158.50 496.10,144.40 497.13,144.40 C498.16,144.40 498.25,158.50 499.27,158.50 C500.30,158.50 500.39,158.50 501.42,158.50 C502.45,158.50 502.54,158.50 503.57,158.50 C504.60,158.50 504.68,158.50 505.71,158.50 C506.74,158.50 506.83,158.50 507.86,158.50 C508.89,158.50 508.97,158.50 510.00,158.50 C511.03,158.50 511.12,158.50 512.15,158.50 C513.18,158.50 513.27,158.50 514.30,158.50 C515.33,158.50 515.41,144.40 516.44,144.40 C517.47,144.40 517.56,158.50 518.59,158.50 C519.62,158.50 519.70,144.40 520.73,144.40 C521.76,144.40 521.85,158.50 522.88,158.50 C523.91,158.50 524.00,158.50 525.02,158.50 C526.05,158.50 526.14,158.50 527.17,158.50 C528.20,158.50 528.29,158.50 529.32,158.50 C530.35,158.50 530.43,158.50 531.46,158.50 C532.49,158.50 532.58,158.50 533.61,158.50 C534.64,158.50 534.72,158.50 535.75,158.50 C536.78,158.50 536.87,158.50 537.90,158.50 C538.93,158.50 539.02,158.50 540.05,158.50 C541.08,158.50 541.16,158.50 542.19,158.50 C543.22,158.50 543.31,158.50 544.34,158.50 C545.37,158.50 545.45,158.50 546.48,158.50 C547.51,158.50 547.60,158.50 548.63,158.50 C549.66,158.50 549.75,158.50 550.77,158.50 C551.80,158.50 551.89,158.50 552.92,158.50 C553.95,158.50 554.04,158.50 555.07,158.50 C556.10,158.50 556.18,158.50 557.21,158.50 C558.24,158.50 558.33,158.50 559.36,158.50 C560.39,158.50 560.47,158.50 561.50,158.50 C562.53,158.50 562.62,158.50 563.65,158.50 C564.68,158.50 564.77,158.50 565.80,158.50 C566.83,158.50 566.91,158.50 567.94,158.50 C568.97,158.50 569.06,158.50 570.09,158.50 C571.12,158.50 571.20,158.50 572.23,158.50 C573.26,158.50 573.35,158.50 574.38,158.50 C575.41,158.50 575.50,158.50 576.52,158.50 C577.55,158.50 577.64,158.50 578.67,158.50 C579.70,158.50 579.79,158.50 580.82,158.50 C581.85,158.50 581.93,158.50 582.96,158.50 C583.99,158.50 584.08,158.50 585.11,158.50 C586.14,158.50 586.22,158.50 587.25,158.50 C588.28,158.50 588.37,158.50 589.40,158.50 C590.43,158.50 590.52,158.50 591.55,158.50 C592.58,158.50 592.66,144.40 593.69,144.40 C594.72,144.40 594.81,144.40 595.84,144.40 C596.87,144.40 596.95,158.50 597.98,158.50 C599.01,158.50 599.10,158.50 600.13,158.50 C601.16,158.50 601.25,158.50 602.27,158.50 C603.30,158.50 603.39,158.50 604.42,158.50 C605.45,158.50 605.54,158.50 606.57,158.50 C607.60,158.50 607.68,158.50 608.71,158.50 C609.74,158.50 609.83,158.50 610.86,158.50 C611.89,158.50 611.97,158.50 613.00,158.50 C614.03,158.50 614.12,158.50 615.15,158.50 C616.18,158.50 616.27,158.50 617.30,158.50 C618.33,158.50 618.41,158.50 619.44,158.50 C620.47,158.50 620.56,158.50 621.59,158.50 C622.62,158.50 622.70,158.50 623.73,158.50 C624.76,158.50 624.85,158.50 625.88,158.50 C626.91,158.50 627.00,158.50 628.02,158.50 C629.05,158.50 629.14,158.50 630.17,158.50 C631.20,158.50 631.29,158.50 632.32,158.50 C633.35,158.50 633.43,144.40 634.46,144.40 C635.49,144.40 635.58,144.40 636.61,144.40 C637.64,144.40 637.72,158.50 638.75,158.50 C639.78,158.50 639.87,158.50 640.90,158.50 C641.93,158.50 642.02,158.50 643.05,158.50 C644.08,158.50 644.16,158.50 645.19,158.50 C646.22,158.50 646.31,158.50 647.34,158.50 C648.37,158.50 648.45,158.50 649.48,158.50 C650.51,158.50 650.60,158.50 651.63,158.50 C652.66,158.50 652.75,158.50 653.77,158.50 C654.80,158.50 654.89,158.50 655.92,158.50 C656.95,158.50 657.04,158.50 658.07,158.50 C659.10,158.50 659.18,158.50 660.21,158.50 C661.24,158.50 661.33,158.50 662.36,158.50 C663.39,158.50 663.47,158.50 664.50,158.50 C665.53,158.50 665.62,158.50 666.65,158.50 C667.68,158.50 667.77,158.50 668.80,158.50 C669.83,158.50 669.91,158.50 670.94,158.50 C671.97,158.50 672.06,158.50 673.09,158.50 C674.12,158.50 674.20,158.50 675.23,158.50 C676.26,158.50 676.35,158.50 677.38,158.50 C678.41,158.50 678.50,158.50 679.52,158.50 C680.55,158.50 680.64,158.50 681.67,158.50 C682.70,158.50 682.79,144.40 683.82,144.40 C684.85,144.40 684.93,144.40 685.96,144.40 C686.99,144.40 687.08,158.50 688.11,158.50 C689.14,158.50 689.22,158.50 690.25,158.50 C691.28,158.50 691.37,144.40 692.40,144.40 C693.43,144.40 693.52,144.40 694.55,144.40 C695.58,144.40 695.66,158.50 696.69,158.50 C697.72,158.50 697.81,158.50 698.84,158.50 C699.87,158.50 699.95,158.50 700.98,158.50 C702.01,158.50 702.10,158.50 703.13,158.50 C704.16,158.50 704.25,158.50 705.27,158.50 C706.30,158.50 706.39,158.50 707.42,158.50 C708.45,158.50 708.54,158.50 709.57,158.50 C710.60,158.50 710.68,158.50 711.71,158.50 C712.74,158.50 712.83,158.50 713.86,158.50 C714.89,158.50 714.97,158.50 716.00,158.50 C717.03,158.50 717.12,158.50 718.15,158.50 C719.18,158.50 719.27,158.50 720.30,158.50 C721.33,158.50 721.41,158.50 722.44,158.50 C723.47,158.50 723.56,158.50 724.59,158.50 C725.62,158.50 725.70,144.40 726.73,144.40 C727.76,144.40 727.85,158.50 728.88,158.50 C729.91,158.50 730.00,144.40 731.02,144.40 C732.05,144.40 732.14,158.50 733.17,158.50 C734.20,158.50 734.29,158.50 735.32,158.50 C736.35,158.50 736.43,158.50 737.46,158.50 C738.49,158.50 738.58,158.50 739.61,158.50 C740.64,158.50 740.72,158.50 741.75,158.50 C742.78,158.50 742.87,158.50 743.90,158.50 C744.93,158.50 745.02,158.50 746.05,158.50 C747.08,158.50 747.16,158.50 748.19,158.50 C749.22,158.50 749.31,158.50 750.34,158.50 C751.37,158.50 751.45,144.40 752.48,144.40 C753.51,144.40 753.60,158.50 754.63,158.50 C755.66,158.50 755.75,158.50 756.77,158.50 C757.80,158.50 757.89,158.50 758.92,158.50 C759.95,158.50 760.04,158.50 761.07,158.50 C762.10,158.50 762.18,158.50 763.21,158.50 C764.24,158.50 764.33,158.50 765.36,158.50 C766.39,158.50 766.47,158.50 767.50,158.50 C768.53,158.50 768.62,158.50 769.65,158.50 C770.68,158.50 770.77,158.50 771.80,158.50 C772.83,158.50 772.91,158.50 773.94,158.50 C774.97,158.50 775.06,158.50 776.09,158.50 C777.12,158.50 777.20,158.50 778.23,158.50 C779.26,158.50 779.35,158.50 780.38,158.50 C781.41,158.50 781.50,144.40 782.52,144.40 C783.55,144.40 783.64,158.50 784.67,158.50 C785.70,158.50 785.79,158.50 786.82,158.50 C787.85,158.50 787.93,158.50 788.96,158.50 C789.99,158.50 790.08,158.50 791.11,158.50 C792.14,158.50 792.22,144.40 793.25,144.40 C794.28,144.40 794.37,148.35 795.40,158.50" fill="none" stroke="#4372c4" stroke-width="0.75" stroke-linejoin="round"/></svg>
<div class="ax" style="left:424.90px;top:163.00px;width:20px">8/7</div>
<div class="ax" style="left:424.90px;top:168.00px;width:20px">14:00</div>
<div class="ax" style="left:476.40px;top:163.00px;width:20px">8/8</div>
<div class="ax" style="left:476.40px;top:168.00px;width:20px">14:00</div>
<div class="ax" style="left:527.90px;top:163.00px;width:20px">8/9</div>
<div class="ax" style="left:527.90px;top:168.00px;width:20px">14:00</div>
<div class="ax" style="left:579.40px;top:163.00px;width:20px">8/10</div>
<div class="ax" style="left:579.40px;top:168.00px;width:20px">14:00</div>
<div class="ax" style="left:630.90px;top:163.00px;width:20px">8/11</div>
<div class="ax" style="left:630.90px;top:168.00px;width:20px">14:00</div>
<div class="ax" style="left:682.40px;top:163.00px;width:20px">8/12</div>
<div class="ax" style="left:682.40px;top:168.00px;width:20px">14:00</div>
<div class="ax" style="left:733.90px;top:163.00px;width:20px">8/13</div>
<div class="ax" style="left:733.90px;top:168.00px;width:20px">14:00</div>
<div class="ax" style="left:785.40px;top:163.00px;width:20px">8/14</div>
<div class="ax" style="left:785.40px;top:168.00px;width:20px">14:00</div>
<div class="card" style="left:5.5px;top:196px;width:196.6px;height:106px">
<div class="ttl" style="left:10.5px;top:7.00px">Top Accessed Blocked Domain</div>
<div class="div" style="top:19px"></div>
<div class="bar" style="left:10.2px;top:32px;width:176.5px">
<i style="width:9.75%;background:#8f0000"></i>
<i style="width:7.25%;background:#e03c00"></i>
<i style="width:7%;background:#ff6600"></i>
<i style="width:76%;background:#ff9c33"></i>
</div>
<div class="lg" style="left:20.5px;top:50.00px;letter-spacing:0.149px">bag.itunes.apple.com</div>
<div class="val" style="right:9.99px;top:50.00px;letter-spacing:-0.088px">3 Hits (10%)</div>
<div class="lg" style="left:20.5px;top:62.00px;letter-spacing:0.172px">d2nxq2uap88usk.cloudfront.net</div>
<div class="val" style="right:9.98px;top:62.00px;letter-spacing:-0.081px">2 Hits (7%)</div>
<div class="lg" style="left:20.5px;top:74.00px;letter-spacing:0.111px">www.royalqueenseeds.de</div>
<div class="val" style="right:9.98px;top:74.00px;letter-spacing:-0.081px">2 Hits (7%)</div>
<div class="lg" style="left:20.5px;top:86.00px;letter-spacing:0.279px">Others</div>
<div class="val" style="right:10.03px;top:86.00px;letter-spacing:-0.127px">22 Hits (76%)</div>
<svg class="a" style="left:0;top:0" width="200" height="106"><rect x="10.60" y="50.80" width="4.6" height="4.5" fill="#8f0000"/><rect x="10.60" y="62.95" width="4.6" height="4.5" fill="#e03c00"/><rect x="10.60" y="74.85" width="4.6" height="4.5" fill="#ff6600"/><rect x="10.60" y="86.85" width="4.6" height="4.5" fill="#ff9c33"/></svg>
</div>
<div class="card" style="left:207.6px;top:196px;width:196.5px;height:106px">
<div class="ttl" style="left:10.5px;top:7.00px">Top Accessed Blocked Category</div>
<div class="div" style="top:19px"></div>
<div class="bar" style="left:10.2px;top:32px;width:176.5px">
<i style="width:14%;background:#ff6600"></i>
<i style="width:10%;background:#ff9c33"></i>
<i style="width:7.3%;background:#ffcc99"></i>
<i style="width:68.7%;background:#ffe5cc"></i>
</div>
<div class="lg" style="left:20.5px;top:50.00px;letter-spacing:0.210px">Media Downloads</div>
<div class="val" style="right:9.96px;top:50.00px;letter-spacing:-0.161px">4 Hits (14%)</div>
<div class="lg" style="left:20.5px;top:62.00px;letter-spacing:0.324px">Pornography</div>
<div class="val" style="right:9.89px;top:62.00px;letter-spacing:-0.088px">3 Hits (10%)</div>
<div class="lg" style="left:20.5px;top:74.00px;letter-spacing:0.351px">Drugs</div>
<div class="val" style="right:9.88px;top:74.00px;letter-spacing:-0.081px">2 Hits (7%)</div>
<div class="lg" style="left:20.5px;top:86.00px;letter-spacing:0.279px">Others</div>
<div class="val" style="right:9.82px;top:86.00px;letter-spacing:-0.018px">20 Hits (69%)</div>
<svg class="a" style="left:0;top:0" width="200" height="106"><rect x="10.60" y="50.80" width="4.6" height="4.5" fill="#ff6600"/><rect x="10.60" y="62.95" width="4.6" height="4.5" fill="#ff9c33"/><rect x="10.60" y="74.85" width="4.6" height="4.5" fill="#ffcc99"/><rect x="10.60" y="86.85" width="4.6" height="4.5" fill="#ffe5cc"/></svg>
</div>
<div class="card" style="left:414.6px;top:196px;width:197.4px;height:106px">
<div class="ttl" style="left:10.5px;top:7.00px">Top Accessed Allowed Domain</div>
<div class="div" style="top:19px"></div>
<div class="bar" style="left:10.7px;top:32px;width:176.5px">
<i style="width:10%;background:#0050e6"></i>
<i style="width:10%;background:#0099ff"></i>
<i style="width:10%;background:#33bbff"></i>
<i style="width:70%;background:#99ddff"></i>
</div>
<div class="lg" style="left:20.5px;top:50.00px;letter-spacing:0.163px">googlemail.l.google.com</div>
<div class="val" style="right:10.33px;top:50.00px;letter-spacing:-0.134px">2 Hits (10%)</div>
<div class="lg" style="left:20.5px;top:62.00px;letter-spacing:0.215px">outlook.office.com</div>
<div class="val" style="right:10.33px;top:62.00px;letter-spacing:-0.134px">2 Hits (10%)</div>
<div class="lg" style="left:20.5px;top:74.00px;letter-spacing:0.140px">star.c10r.facebook.com</div>
<div class="val" style="right:10.33px;top:74.00px;letter-spacing:-0.134px">2 Hits (10%)</div>
<div class="lg" style="left:20.5px;top:86.00px;letter-spacing:0.279px">Others</div>
<div class="val" style="right:10.32px;top:86.00px;letter-spacing:-0.118px">14 Hits (70%)</div>
<svg class="a" style="left:0;top:0" width="200" height="106"><rect x="11.40" y="50.80" width="4.6" height="4.5" fill="#0050e6"/><rect x="11.40" y="62.95" width="4.6" height="4.5" fill="#0099ff"/><rect x="11.40" y="74.85" width="4.6" height="4.5" fill="#33bbff"/><rect x="11.40" y="86.85" width="4.6" height="4.5" fill="#99ddff"/></svg>
</div>
<div class="card" style="left:617.6px;top:196px;width:196.4px;height:106px">
<div class="ttl" style="left:10.5px;top:7.00px">Top Accessed Allowed Category</div>
<div class="div" style="top:19px"></div>
<div class="bar" style="left:10.0px;top:32px;width:176.4px">
<i style="width:25%;background:#0099ff"></i>
<i style="width:10%;background:#33bbff"></i>
<i style="width:10%;background:#99ddff"></i>
<i style="width:55%;background:#cceeff"></i>
</div>
<div class="lg" style="left:20.5px;top:50.00px;letter-spacing:0.180px">Web Mail</div>
<div class="val" style="right:10.10px;top:50.00px;letter-spacing:-0.097px">5 Hits (25%)</div>
<div class="lg" style="left:20.5px;top:62.00px;letter-spacing:0.147px">Internet Services</div>
<div class="val" style="right:10.13px;top:62.00px;letter-spacing:-0.134px">2 Hits (10%)</div>
<div class="lg" style="left:20.5px;top:74.00px;letter-spacing:0.200px">Social Networking</div>
<div class="val" style="right:10.13px;top:74.00px;letter-spacing:-0.134px">2 Hits (10%)</div>
<div class="lg" style="left:20.5px;top:86.00px;letter-spacing:0.279px">Others</div>
<div class="val" style="right:10.24px;top:86.00px;letter-spacing:-0.238px">11 Hits (55%)</div>
<svg class="a" style="left:0;top:0" width="200" height="106"><rect x="11.00" y="50.80" width="4.6" height="4.5" fill="#0099ff"/><rect x="11.00" y="62.95" width="4.6" height="4.5" fill="#33bbff"/><rect x="11.00" y="74.85" width="4.6" height="4.5" fill="#99ddff"/><rect x="11.00" y="86.85" width="4.6" height="4.5" fill="#cceeff"/></svg>
</div>
<div class="card" style="left:5.5px;top:312px;width:196.6px;height:106px">
<div class="ttl" style="left:10.5px;top:7.00px">Top Source IP (To Blocked Domain)</div>
<div class="div" style="top:19px"></div>
<div class="bar" style="left:10.2px;top:32px;width:176.5px">
<i style="width:38%;background:#8b0040"></i>
<i style="width:34%;background:#dd0040"></i>
<i style="width:28%;background:#ff5566"></i>
</div>
<div class="lg" style="left:20.5px;top:51.00px;transform:scaleX(0.855);transform-origin:0 0">192.168.28.241</div>
<div class="val" style="right:10.11px;top:51.00px;letter-spacing:-0.212px">11 Hits (38%)</div>
<div class="lg" style="left:20.5px;top:63.00px;transform:scaleX(0.848);transform-origin:0 0">192.168.115.43</div>
<div class="val" style="right:9.98px;top:63.00px;letter-spacing:-0.077px">10 Hits (34%)</div>
<div class="lg" style="left:20.5px;top:75.00px;transform:scaleX(0.842);transform-origin:0 0">192.168.74.19</div>
<div class="val" style="right:9.94px;top:75.00px;letter-spacing:-0.043px">8 Hits (28%)</div>
<svg class="a" style="left:0;top:0" width="200" height="106"><rect x="10.60" y="51.15" width="4.6" height="4.5" fill="#8b0040"/><rect x="10.60" y="63.25" width="4.6" height="4.5" fill="#dd0040"/><rect x="10.60" y="75.55" width="4.6" height="4.5" fill="#ff5566"/></svg>
</div>
<div class="card" style="left:207.6px;top:312px;width:196.5px;height:106px">
<div class="ttl" style="left:10.5px;top:7.00px">Top Accessed Blocked Query Type</div>
<div class="div" style="top:19px"></div>
<div class="bar" style="left:10.2px;top:32px;width:176.5px">
<i style="width:62%;background:#dd0040"></i>
<i style="width:17%;background:#ff5566"></i>
<i style="width:17%;background:#ffaaaa"></i>
<i style="width:4%;background:#ffdddd"></i>
</div>
<div class="lg" style="left:20.5px;top:51.00px;letter-spacing:0.000px">A</div>
<div class="val" style="right:9.97px;top:51.00px;letter-spacing:-0.168px">18 Hits (62%)</div>
<div class="lg" style="left:20.5px;top:63.00px;letter-spacing:0.096px">AAAA</div>
<div class="val" style="right:10.01px;top:63.00px;letter-spacing:-0.207px">5 Hits (17%)</div>
<div class="lg" style="left:20.5px;top:75.00px;letter-spacing:-0.085px">HTTPS</div>
<div class="val" style="right:10.01px;top:75.00px;letter-spacing:-0.207px">5 Hits (17%)</div>
<div class="lg" style="left:20.5px;top:87.00px;letter-spacing:0.279px">Others</div>
<div class="val" style="right:9.95px;top:87.00px;letter-spacing:-0.151px">1 Hits (3%)</div>
<svg class="a" style="left:0;top:0" width="200" height="106"><rect x="10.60" y="51.15" width="4.6" height="4.5" fill="#dd0040"/><rect x="10.60" y="63.25" width="4.6" height="4.5" fill="#ff5566"/><rect x="10.60" y="75.55" width="4.6" height="4.5" fill="#ffaaaa"/><rect x="10.60" y="87.65" width="4.6" height="4.5" fill="#ffdddd"/></svg>
</div>
<div class="card" style="left:414.6px;top:312px;width:197.4px;height:106px">
<div class="ttl" style="left:10.5px;top:7.00px">Top Source IP (To Allowed Domain)</div>
<div class="div" style="top:19px"></div>
<div class="bar" style="left:10.7px;top:32px;width:176.5px">
<i style="width:40%;background:#006600"></i>
<i style="width:30%;background:#44aa11"></i>
<i style="width:30%;background:#88cc44"></i>
</div>
<div class="lg" style="left:20.5px;top:51.00px;transform:scaleX(0.848);transform-origin:0 0">192.168.115.43</div>
<div class="val" style="right:10.15px;top:51.00px;letter-spacing:0.048px">8 Hits (40%)</div>
<div class="lg" style="left:20.5px;top:63.00px;transform:scaleX(0.855);transform-origin:0 0">192.168.28.241</div>
<div class="val" style="right:10.12px;top:63.00px;letter-spacing:0.075px">6 Hits (30%)</div>
<div class="lg" style="left:20.5px;top:75.00px;transform:scaleX(0.842);transform-origin:0 0">192.168.74.19</div>
<div class="val" style="right:10.12px;top:75.00px;letter-spacing:0.075px">6 Hits (30%)</div>
<svg class="a" style="left:0;top:0" width="200" height="106"><rect x="11.40" y="51.15" width="4.6" height="4.5" fill="#006600"/><rect x="11.40" y="63.25" width="4.6" height="4.5" fill="#44aa11"/><rect x="11.40" y="75.55" width="4.6" height="4.5" fill="#88cc44"/></svg>
</div>
<div class="card" style="left:617.6px;top:312px;width:196.4px;height:106px">
<div class="ttl" style="left:10.5px;top:7.00px">Top Accessed Allowed Query Type</div>
<div class="div" style="top:19px"></div>
<div class="bar" style="left:10.0px;top:32px;width:176.4px">
<i style="width:80%;background:#44aa11"></i>
<i style="width:15%;background:#88cc44"></i>
<i style="width:5%;background:#c4e4a4"></i>
</div>
<div class="lg" style="left:20.5px;top:51.00px;letter-spacing:0.000px">A</div>
<div class="val" style="right:10.13px;top:51.00px;letter-spacing:-0.127px">16 Hits (80%)</div>
<div class="lg" style="left:20.5px;top:63.00px;letter-spacing:0.096px">AAAA</div>
<div class="val" style="right:10.19px;top:63.00px;letter-spacing:-0.188px">3 Hits (15%)</div>
<div class="lg" style="left:20.5px;top:75.00px;transform:scaleX(0.958);transform-origin:0 0">PTR</div>
<div class="val" style="right:10.16px;top:75.00px;letter-spacing:-0.161px">1 Hits (5%)</div>
<svg class="a" style="left:0;top:0" width="200" height="106"><rect x="11.00" y="51.15" width="4.6" height="4.5" fill="#44aa11"/><rect x="11.00" y="63.25" width="4.6" height="4.5" fill="#88cc44"/><rect x="11.00" y="75.55" width="4.6" height="4.5" fill="#c4e4a4"/></svg>
</div>
<div class="a" style="left:822px;top:0;width:9px;height:407px;background:#fcfcfc"></div>
<div class="a" style="left:824.1px;top:-5px;width:5.3px;height:240.7px;background:#888;border-radius:2.5px"></div>
</body></html>
